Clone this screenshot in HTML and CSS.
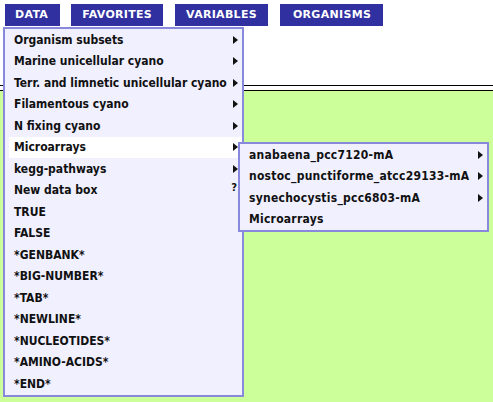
FILE: index.html
```html
<!DOCTYPE html>
<html>
<head>
<meta charset="utf-8">
<link rel="stylesheet" href="styles.css">
</head>
<body>
<nav class="tabs">
  <span class="tab tab-data">DATA</span>
  <span class="tab">FAVORITES</span>
  <span class="tab">VARIABLES</span>
  <span class="tab tab-org">ORGANISMS</span>
</nav>
<div class="top-space"></div>
<div class="rule"></div>
<div class="workspace"></div>

<ul class="menu main-menu">
  <li class="item"><span>Organism subsets</span><i class="arrow"></i></li>
  <li class="item"><span>Marine unicellular cyano</span><i class="arrow"></i></li>
  <li class="item"><span>Terr. and limnetic unicellular cyano</span><i class="arrow"></i></li>
  <li class="item"><span>Filamentous cyano</span><i class="arrow"></i></li>
  <li class="item"><span>N fixing cyano</span><i class="arrow"></i></li>
  <li class="item active"><span>Microarrays</span><i class="arrow"></i></li>
  <li class="item"><span>kegg-pathways</span><i class="arrow"></i></li>
  <li class="item"><span>New data box</span><b class="help">?</b></li>
  <li class="item"><span>TRUE</span></li>
  <li class="item"><span>FALSE</span></li>
  <li class="item"><span>*GENBANK*</span></li>
  <li class="item"><span>*BIG-NUMBER*</span></li>
  <li class="item"><span>*TAB*</span></li>
  <li class="item"><span>*NEWLINE*</span></li>
  <li class="item"><span>*NUCLEOTIDES*</span></li>
  <li class="item"><span>*AMINO-ACIDS*</span></li>
  <li class="item"><span>*END*</span></li>
</ul>

<ul class="menu sub-menu">
  <li class="item"><span>anabaena_pcc7120-mA</span><i class="arrow"></i></li>
  <li class="item"><span>nostoc_punctiforme_atcc29133-mA</span><i class="arrow"></i></li>
  <li class="item"><span>synechocystis_pcc6803-mA</span><i class="arrow"></i></li>
  <li class="item"><span>Microarrays</span></li>
</ul>
</body>
</html>
```
FILE: styles.css
```css
html, body {
  margin: 0;
  padding: 0;
  background: #ffffff;
  height: 100%;
}
body {
  font-family: "DejaVu Sans Condensed", "DejaVu Sans", sans-serif;
  display: flex;
  flex-direction: column;
  overflow: hidden;
}
.tabs {
  display: flex;
  gap: 12px;
  padding: 4px 0 0 5px;
  height: 22px;
}
.tab {
  background: #3030a0;
  color: #ffffff;
  font-family: "DejaVu Sans", sans-serif;
  font-weight: bold;
  font-size: 11px;
  letter-spacing: 0.3px;
  line-height: 22px;
  padding: 0 11px;
}
.tab-data {
  padding: 0 12px 0 10px;
  margin-right: -1px;
}
.tab-org {
  padding: 0 12px 0 13px;
}
.top-space {
  height: 59px;
}
.rule {
  height: 4px;
  border-top: 1px solid #000;
  border-bottom: 1px solid #000;
}
.workspace {
  flex: 1;
  background: #ccff99;
}
.menu {
  position: absolute;
  margin: 0;
  list-style: none;
  background: #f0f0ff;
  border: 2px solid #8888dd;
  padding: 0 0 0 4px;
  font-weight: bold;
  font-size: 12px;
  color: #111111;
}
.main-menu {
  left: 3px;
  top: 27px;
  width: 233px;
}
.sub-menu {
  left: 238px;
  top: 142px;
  width: 243px;
  letter-spacing: 0.25px;
}
.item {
  height: 21.5px;
  display: flex;
  align-items: center;
  justify-content: space-between;
  padding: 0 4px 0 5px;
}
.item.active {
  background: #ffffff;
}
.arrow {
  width: 0;
  height: 0;
  border-top: 4px solid transparent;
  border-bottom: 4px solid transparent;
  border-left: 5px solid #111111;
}
.help {
  font-family: "DejaVu Sans", sans-serif;
  font-size: 10px;
  line-height: 10px;
  margin-top: -4px;
  margin-right: 1px;
}
```
